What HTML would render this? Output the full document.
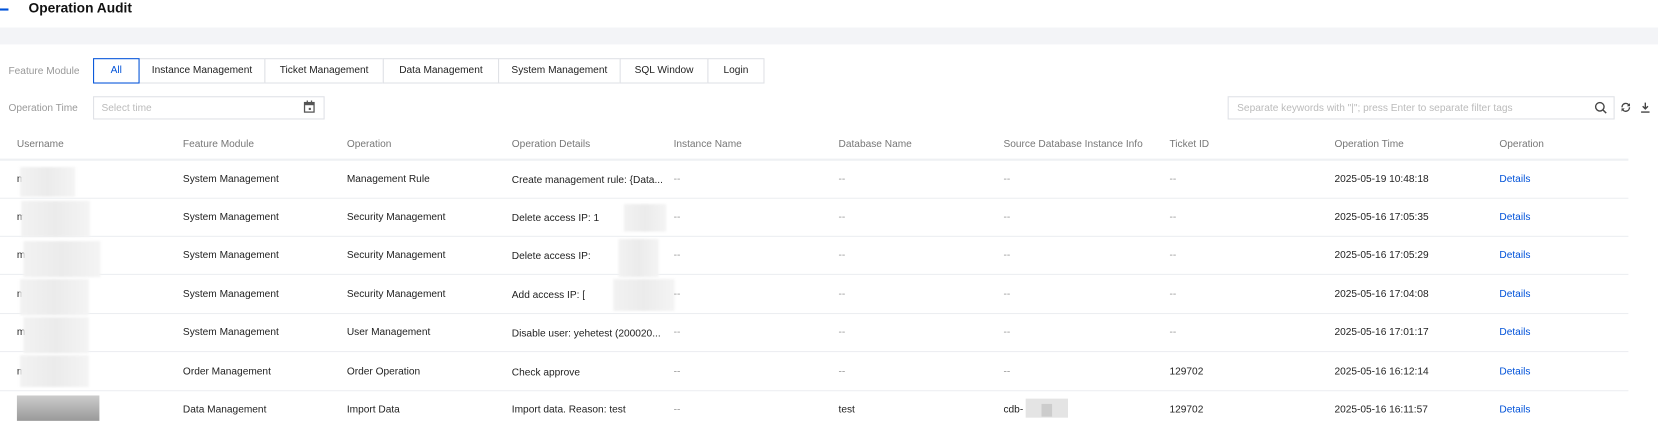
<!DOCTYPE html><html><head><style>
*{margin:0;padding:0;box-sizing:border-box}
body{width:1658px;height:423px;background:#fff;font-family:"Liberation Sans",Arial,sans-serif;font-size:9.6px;color:#222;position:relative;overflow:hidden}
#w{position:absolute;left:0;top:0;width:1568px;height:400px;transform:scale(1.05740);transform-origin:0 0}
.a{position:absolute;white-space:nowrap}
.tab{position:absolute;top:55px;height:24px;border:1px solid #dfe1e6;line-height:22px;text-align:center;font-size:9.6px;color:#222;background:#fff}
.g{color:#999}
.hd{color:#777;top:131px}
.ln{position:absolute;left:0;width:1540px;height:1px;background:#eceef1}
.blur{position:absolute;background:linear-gradient(90deg,#f2f2f2,#ebebeb,#f4f4f4);filter:blur(1px)}
.d{color:#0052d9}
</style></head><body><div id="w">
<div class="a" style="left:0;top:8px;width:8px;height:2px;background:#0052d9"></div>
<div class="a" style="left:27px;top:0;font-size:13px;font-weight:bold;color:#111">Operation Audit</div>
<div class="a" style="left:0;top:26px;width:1658px;height:16px;background:#f3f4f7"></div>
<div class="a g" style="left:8px;top:62px">Feature Module</div>
<div class="tab" style="left:88px;width:44px;border-color:#0052d9;color:#0052d9;z-index:2">All</div>
<div class="tab" style="left:131px;width:120px">Instance Management</div>
<div class="tab" style="left:250px;width:113px">Ticket Management</div>
<div class="tab" style="left:362px;width:110px">Data Management</div>
<div class="tab" style="left:471px;width:116px">System Management</div>
<div class="tab" style="left:586px;width:84px">SQL Window</div>
<div class="tab" style="left:669px;width:54px">Login</div>
<div class="a g" style="left:8px;top:97px">Operation Time</div>
<div class="a" style="left:88px;top:91px;width:219px;height:22px;border:1px solid #dfe1e6"></div>
<div class="a" style="left:96px;top:97px;color:#bbb">Select time</div>
<svg class="a" style="left:287px;top:95px" width="11" height="12" viewBox="0 0 11 12"><rect x="1" y="2" width="9" height="9" fill="none" stroke="#555" stroke-width="1.2"/><rect x="1" y="2" width="9" height="2.5" fill="#555"/><rect x="3" y="0" width="1.2" height="3" fill="#555"/><rect x="7" y="0" width="1.2" height="3" fill="#555"/><rect x="5" y="7" width="2" height="2" fill="#555"/></svg>
<div class="a" style="left:1161px;top:91px;width:366px;height:22px;border:1px solid #dfe1e6"></div>
<div class="a" style="left:1170px;top:97px;color:#bbb">Separate keywords with "|"; press Enter to separate filter tags</div>
<svg class="a" style="left:1508px;top:96px" width="12" height="12" viewBox="0 0 12 12"><circle cx="5" cy="5" r="4" fill="none" stroke="#444" stroke-width="1.3"/><line x1="8" y1="8" x2="11" y2="11" stroke="#444" stroke-width="1.4"/></svg>
<svg class="a" style="left:1532px;top:96px" width="11" height="11" viewBox="0 0 11 11"><path d="M2 5.5A3.5 3.5 0 0 1 8.5 3.5M9 5.5A3.5 3.5 0 0 1 2.5 7.5" fill="none" stroke="#444" stroke-width="1.3"/><path d="M9.5 1.5v3h-3z M1.5 9.5v-3h3z" fill="#444"/></svg>
<svg class="a" style="left:1551px;top:96px" width="10" height="11" viewBox="0 0 10 11"><path d="M5 1v6M2.5 4.5L5 7l2.5-2.5" fill="none" stroke="#444" stroke-width="1.3"/><line x1="1" y1="10" x2="9" y2="10" stroke="#444" stroke-width="1.3"/></svg>
<div class="a hd" style="left:16px">Username</div>
<div class="a hd" style="left:173px">Feature Module</div>
<div class="a hd" style="left:328px">Operation</div>
<div class="a hd" style="left:484px">Operation Details</div>
<div class="a hd" style="left:637px">Instance Name</div>
<div class="a hd" style="left:793px">Database Name</div>
<div class="a hd" style="left:949px">Source Database Instance Info</div>
<div class="a hd" style="left:1106px">Ticket ID</div>
<div class="a hd" style="left:1262px">Operation Time</div>
<div class="a hd" style="left:1418px">Operation</div>
<div class="ln" style="top:150px;height:2px;background:#eef0f3"></div>
<div class="ln" style="top:187px"></div><div class="ln" style="top:223px"></div><div class="ln" style="top:259px"></div><div class="ln" style="top:296px"></div><div class="ln" style="top:332px"></div><div class="ln" style="top:369px"></div>

<div class="a" style="left:16px;top:164px">m</div><div class="blur" style="left:19px;top:158px;width:52px;height:28px"></div>
<div class="a" style="left:173px;top:164px">System Management</div><div class="a" style="left:328px;top:164px">Management Rule</div><div class="a" style="left:484px;top:165px">Create management rule: {Data...</div>
<div class="a g" style="left:637px;top:164px">--</div><div class="a g" style="left:793px;top:164px">--</div><div class="a g" style="left:949px;top:164px">--</div><div class="a g" style="left:1106px;top:164px">--</div>
<div class="a" style="left:1262px;top:164px">2025-05-19 10:48:18</div><div class="a d" style="left:1418px;top:164px">Details</div>

<div class="a" style="left:16px;top:200px">m</div><div class="blur" style="left:20px;top:190px;width:65px;height:34px"></div>
<div class="a" style="left:173px;top:200px">System Management</div><div class="a" style="left:328px;top:200px">Security Management</div><div class="a" style="left:484px;top:201px">Delete access IP: 1</div><div class="blur" style="left:590px;top:193px;width:40px;height:26px"></div>
<div class="a g" style="left:637px;top:200px">--</div><div class="a g" style="left:793px;top:200px">--</div><div class="a g" style="left:949px;top:200px">--</div><div class="a g" style="left:1106px;top:200px">--</div>
<div class="a" style="left:1262px;top:200px">2025-05-16 17:05:35</div><div class="a d" style="left:1418px;top:200px">Details</div>

<div class="a" style="left:16px;top:236px">m</div><div class="blur" style="left:22px;top:228px;width:73px;height:34px"></div>
<div class="a" style="left:173px;top:236px">System Management</div><div class="a" style="left:328px;top:236px">Security Management</div><div class="a" style="left:484px;top:237px">Delete access IP:</div><div class="blur" style="left:585px;top:226px;width:38px;height:36px"></div>
<div class="a g" style="left:637px;top:236px">--</div><div class="a g" style="left:793px;top:236px">--</div><div class="a g" style="left:949px;top:236px">--</div><div class="a g" style="left:1106px;top:236px">--</div>
<div class="a" style="left:1262px;top:236px">2025-05-16 17:05:29</div><div class="a d" style="left:1418px;top:236px">Details</div>

<div class="a" style="left:16px;top:273px">m</div><div class="blur" style="left:19px;top:264px;width:65px;height:34px"></div>
<div class="a" style="left:173px;top:273px">System Management</div><div class="a" style="left:328px;top:273px">Security Management</div><div class="a" style="left:484px;top:274px">Add access IP: [</div><div class="blur" style="left:580px;top:264px;width:58px;height:30px"></div>
<div class="a g" style="left:637px;top:273px">--</div><div class="a g" style="left:793px;top:273px">--</div><div class="a g" style="left:949px;top:273px">--</div><div class="a g" style="left:1106px;top:273px">--</div>
<div class="a" style="left:1262px;top:273px">2025-05-16 17:04:08</div><div class="a d" style="left:1418px;top:273px">Details</div>

<div class="a" style="left:16px;top:309px">m</div><div class="blur" style="left:22px;top:300px;width:62px;height:34px"></div>
<div class="a" style="left:173px;top:309px">System Management</div><div class="a" style="left:328px;top:309px">User Management</div><div class="a" style="left:484px;top:310px">Disable user: yehetest (200020...</div>
<div class="a g" style="left:637px;top:309px">--</div><div class="a g" style="left:793px;top:309px">--</div><div class="a g" style="left:949px;top:309px">--</div><div class="a g" style="left:1106px;top:309px">--</div>
<div class="a" style="left:1262px;top:309px">2025-05-16 17:01:17</div><div class="a d" style="left:1418px;top:309px">Details</div>

<div class="a" style="left:16px;top:346px">m</div><div class="blur" style="left:19px;top:336px;width:65px;height:30px"></div>
<div class="a" style="left:173px;top:346px">Order Management</div><div class="a" style="left:328px;top:346px">Order Operation</div><div class="a" style="left:484px;top:347px">Check approve</div>
<div class="a g" style="left:637px;top:346px">--</div><div class="a g" style="left:793px;top:346px">--</div><div class="a g" style="left:949px;top:346px">--</div><div class="a" style="left:1106px;top:346px">129702</div>
<div class="a" style="left:1262px;top:346px">2025-05-16 16:12:14</div><div class="a d" style="left:1418px;top:346px">Details</div>

<div class="a" style="left:16px;top:374px;width:78px;height:24px;background:linear-gradient(180deg,#ccc,#999)"></div>
<div class="a" style="left:173px;top:382px">Data Management</div><div class="a" style="left:328px;top:382px">Import Data</div><div class="a" style="left:484px;top:382px">Import data. Reason: test</div>
<div class="a g" style="left:637px;top:382px">--</div><div class="a" style="left:793px;top:382px">test</div><div class="a" style="left:949px;top:382px">cdb-</div>
<div class="a" style="left:970px;top:377px;width:40px;height:18px;background:#e4e4e4"></div><div class="a" style="left:985px;top:382px;width:10px;height:12px;background:#ccc"></div>
<div class="a" style="left:1106px;top:382px">129702</div>
<div class="a" style="left:1262px;top:382px">2025-05-16 16:11:57</div><div class="a d" style="left:1418px;top:382px">Details</div>
</div></body></html>
